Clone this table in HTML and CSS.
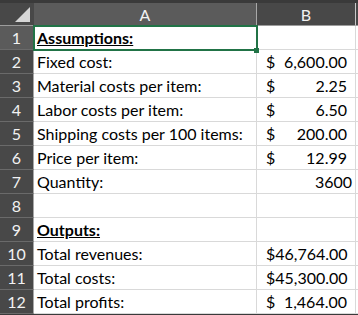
FILE: index.html
```html
<!DOCTYPE html>
<html lang="en">
<head>
    <meta charset="UTF-8">
    <title>Break-even sheet</title>
    <link rel="stylesheet" href="styles.css">
</head>
<body>
    <div class="sheet">
        <div class="corner">
            <svg width="33" height="22" viewBox="0 0 33 22"><polygon points="15,19 30,19 30,4" fill="#d6d6d6"/></svg>
        </div>
        <div class="colhead sel">A</div>
        <div class="colhead">B</div>
        <div class="colhead last"></div>

        <div class="rowhead sel">1</div>
        <div class="cell active"><b class="title">Assumptions:</b></div>
        <div class="cell"></div>
        <div class="cell last"></div>

        <div class="rowhead">2</div>
        <div class="cell">Fixed cost:</div>
        <div class="cell acct"><span>$</span><span>6,600.00</span></div>
        <div class="cell last"></div>

        <div class="rowhead">3</div>
        <div class="cell">Material costs per item:</div>
        <div class="cell acct"><span>$</span><span>2.25</span></div>
        <div class="cell last"></div>

        <div class="rowhead">4</div>
        <div class="cell">Labor costs per item:</div>
        <div class="cell acct"><span>$</span><span>6.50</span></div>
        <div class="cell last"></div>

        <div class="rowhead">5</div>
        <div class="cell">Shipping costs per 100 items:</div>
        <div class="cell acct"><span>$</span><span>200.00</span></div>
        <div class="cell last"></div>

        <div class="rowhead">6</div>
        <div class="cell">Price per item:</div>
        <div class="cell acct"><span>$</span><span>12.99</span></div>
        <div class="cell last"></div>

        <div class="rowhead">7</div>
        <div class="cell">Quantity:</div>
        <div class="cell num">3600</div>
        <div class="cell last"></div>

        <div class="rowhead">8</div>
        <div class="cell"></div>
        <div class="cell"></div>
        <div class="cell last"></div>

        <div class="rowhead">9</div>
        <div class="cell"><b class="title">Outputs:</b></div>
        <div class="cell"></div>
        <div class="cell last"></div>

        <div class="rowhead">10</div>
        <div class="cell">Total revenues:</div>
        <div class="cell acct"><span>$</span><span>46,764.00</span></div>
        <div class="cell last"></div>

        <div class="rowhead">11</div>
        <div class="cell">Total costs:</div>
        <div class="cell acct"><span>$</span><span>45,300.00</span></div>
        <div class="cell last"></div>

        <div class="rowhead">12</div>
        <div class="cell">Total profits:</div>
        <div class="cell acct"><span>$</span><span>1,464.00</span></div>
        <div class="cell last"></div>
    </div>
</body>
</html>
```

FILE: styles.css
```css
body {
    margin: 0;
    background: #3a3a3a;
    font-family: Lato, "Liberation Sans", sans-serif;
    font-size: 16px;
}
.sheet {
    display: grid;
    grid-template-columns: 34px 223px 99px 1fr;
    grid-template-rows: 23px repeat(12, 24px);
    margin-top: 3px;
    background: #ffffff;
}
.corner, .colhead, .rowhead, .cell {
    box-sizing: border-box;
    line-height: 23px;
    white-space: nowrap;
}
.corner {
    background: #484848;
    border-right: 1px solid #484848;
    border-bottom: 1px solid #9c9c9c;
}
.corner svg {
    display: block;
}
.colhead {
    background: #484848;
    color: #f2f2f2;
    text-align: center;
    border-right: 1px solid #c8c8c8;
    border-bottom: 1px solid #9c9c9c;
}
.colhead.sel {
    background: #5b5b5b;
    border-right-color: #a8a8a8;
}
.colhead.last {
    border-right: none;
}
.rowhead {
    background: #484848;
    color: #f2f2f2;
    text-align: center;
    border-right: 1px solid #a8a8a8;
    border-bottom: 1px solid #6a6a6a;
}
.rowhead.sel {
    background: #5b5b5b;
}
.cell {
    color: #000000;
    padding: 0 3px 0 3px;
    border-right: 1px solid #d9d9d9;
    border-bottom: 1px solid #d9d9d9;
}
.cell.last {
    border-right: none;
}
.title {
    text-decoration: underline;
}
.acct {
    display: flex;
    justify-content: space-between;
    padding: 0 8px 0 9px;
}
.num {
    text-align: right;
}
.active {
    position: relative;
}
.active::after {
    content: "";
    position: absolute;
    left: -1px;
    top: -1px;
    right: -2px;
    bottom: -2px;
    border: 2px solid #217346;
}
.active::before {
    content: "";
    position: absolute;
    right: -3px;
    bottom: -4px;
    width: 5px;
    height: 5px;
    background: #217346;
    z-index: 1;
}
```
